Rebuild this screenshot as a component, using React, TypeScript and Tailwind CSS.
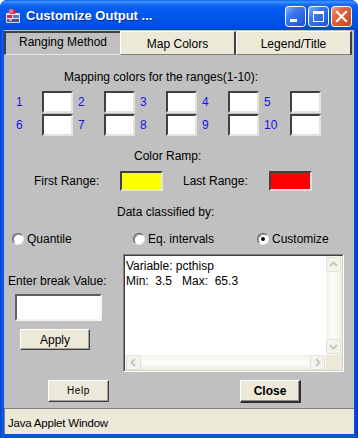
import React from "react";

function TitleIcon() {
  return (
    <svg width="16" height="16" viewBox="0 0 16 16">
      <rect x="1" y="5" width="14" height="10" rx="1" fill="#E8E0F0" />
      <path d="M3 3 L7 1 L11 3 L9 6 L5 6 Z" fill="#E04060" />
      <circle cx="6" cy="3" r="2" fill="#F07090" />
      <circle cx="10" cy="4" r="1.6" fill="#D02040" />
      <rect x="2" y="7" width="5" height="3" fill="#C03050" />
      <rect x="8" y="7" width="6" height="3" fill="#6070D0" />
      <rect x="2" y="11" width="12" height="3" fill="#4050B0" />
      <rect x="4" y="11" width="3" height="2" fill="#F090B0" />
    </svg>
  );
}

function WinButton({ kind }: { kind: "min" | "max" | "close" }) {
  const isClose = kind === "close";
  return (
    <svg width="21" height="21" viewBox="0 0 21 21">
      <defs>
        <linearGradient id={"g" + kind} x1="0" y1="0" x2="1" y2="1">
          {isClose ? (
            <>
              <stop offset="0" stopColor="#F2A183" />
              <stop offset="0.35" stopColor="#E3663F" />
              <stop offset="1" stopColor="#C83F1A" />
            </>
          ) : (
            <>
              <stop offset="0" stopColor="#8BB3FA" />
              <stop offset="0.35" stopColor="#3D79F2" />
              <stop offset="1" stopColor="#1E4FD6" />
            </>
          )}
        </linearGradient>
      </defs>
      <rect x="0.5" y="0.5" width="20" height="20" rx="3" fill={`url(#g${kind})`} stroke="#FFFFFF" />
      {kind === "min" && <rect x="5" y="13" width="7" height="3" fill="#FFFFFF" />}
      {kind === "max" && (
        <>
          <rect x="5.5" y="5.5" width="10" height="10" fill="none" stroke="#FFFFFF" />
          <rect x="5" y="5" width="11" height="3" fill="#FFFFFF" />
        </>
      )}
      {isClose && (
        <path d="M6 6 L15 15 M15 6 L6 15" stroke="#FFFFFF" strokeWidth="2.2" strokeLinecap="square" />
      )}
    </svg>
  );
}

function Chevron({ dir }: { dir: "up" | "down" | "left" | "right" }) {
  const d =
    dir === "up"
      ? "M4 9 L7.5 5.5 L11 9"
      : dir === "down"
      ? "M4 6 L7.5 9.5 L11 6"
      : dir === "left"
      ? "M9 4 L5.5 7.5 L9 11"
      : "M6 4 L9.5 7.5 L6 11";
  return (
    <svg width="15" height="15" viewBox="0 0 15 15">
      <rect x="0.5" y="0.5" width="14" height="14" rx="2" fill="#F4F3EE" stroke="#E3E1D6" />
      <path d={d} fill="none" stroke="#C9C7BA" strokeWidth="2" />
    </svg>
  );
}

function RangeCell({ n }: { n: number }) {
  return (
    <div className="w-[62px] flex items-center">
      <div className="w-[26px] text-[#1515E8]">{n}</div>
      <div className="w-[31px] h-[22px] bg-white border-2 border-t-[#404040] border-l-[#404040] border-b-[#E2E2E2] border-r-[#E2E2E2]" />
    </div>
  );
}

function Radio({ label, checked }: { label: string; checked?: boolean }) {
  return (
    <div className="flex items-center">
      <div className="w-[12px] h-[12px] rounded-full bg-white border border-t-[#5A5A5A] border-l-[#5A5A5A] border-b-[#E8E8E8] border-r-[#E8E8E8] flex items-center justify-center shadow-[inset_1px_1px_0_#A0A0A0]">
        {checked && <div className="w-[4px] h-[4px] rounded-full bg-black" />}
      </div>
      <div className="ml-[3px]">{label}</div>
    </div>
  );
}

export default function App() {
  return (
    <div className="w-[358px] h-[438px] flex flex-col bg-[#0055E5] rounded-t-[7px] overflow-hidden font-['Liberation_Sans',Arial,sans-serif] text-[12px] leading-[14px] text-black">
      {/* Title bar */}
      <div className="h-[30px] flex items-center bg-[linear-gradient(180deg,#0A5EEF_0%,#3D95FF_6%,#2675F8_12%,#0A5FF0_22%,#0058EE_40%,#0055E5_65%,#0050DD_85%,#0046CF_100%)]">
        <div className="ml-[5px] mt-[1px] w-[16px] h-[16px]">
          <TitleIcon />
        </div>
        <div className="ml-[5px] mt-[2px] text-[13px] font-bold text-white [text-shadow:1px_1px_0_#0A2A90]">
          Customize Output ...
        </div>
        <div className="ml-auto mr-[6px] mt-[2px] flex gap-[2px]">
          <WinButton kind="min" />
          <WinButton kind="max" />
          <WinButton kind="close" />
        </div>
      </div>

      {/* Frame */}
      <div className="flex-1 flex flex-col px-[4px] pb-[4px] bg-[linear-gradient(90deg,#0037C8_0px,#0B5EF0_2px,#0055E5_4px,#0055E5_354px,#0046D5_356px,#0035B8_358px)]">
        <div className="flex-1 flex flex-col bg-[#C0C0C0]">
          {/* Tabs */}
          <div className="mt-[1px] h-[24px] flex">
            <div className="w-[116px] flex items-center justify-center pb-[3px] bg-[#C0C0C0] border-t-2 border-l-2 border-b border-t-[#404040] border-l-[#404040] border-b-[#E6E6E6]">
              Ranging Method
            </div>
            <div className="w-[116px] flex items-center justify-center pt-[1px] bg-[#ECE9D8] border border-r-2 border-t-white border-l-white border-b-[#808080] border-r-[#404040]">
              Map Colors
            </div>
            <div className="w-[116px] flex items-center justify-center pt-[1px] bg-[#ECE9D8] border border-r-2 border-t-white border-l-white border-b-[#808080] border-r-[#404040]">
              Legend/Title
            </div>
          </div>

          {/* Heading */}
          <div className="mt-[15px] h-[14px] pl-[60px]">Mapping colors for the ranges(1-10):</div>

          {/* Range grid */}
          <div className="mt-[7px] pl-[12px] flex">
            {[1, 2, 3, 4, 5].map((n) => (
              <RangeCell key={n} n={n} />
            ))}
          </div>
          <div className="mt-[1px] pl-[12px] flex">
            {[6, 7, 8, 9, 10].map((n) => (
              <RangeCell key={n} n={n} />
            ))}
          </div>

          <div className="mt-[13px] h-[14px] pl-[130px]">Color Ramp:</div>

          <div className="mt-[8px] h-[20px] pl-[30px] flex items-center">
            <div className="w-[86px]">First Range:</div>
            <div className="w-[43px] h-[20px] bg-[#FFFF00] border-2 border-t-[#404040] border-l-[#404040] border-b-[#E2E2E2] border-r-[#E2E2E2]" />
            <div className="ml-[20px] w-[86px]">Last Range:</div>
            <div className="w-[43px] h-[20px] bg-[#FF0000] border-2 border-t-[#404040] border-l-[#404040] border-b-[#E2E2E2] border-r-[#E2E2E2]" />
          </div>

          <div className="mt-[14px] h-[14px] pl-[113px]">Data classified by:</div>

          <div className="mt-[13px] h-[14px] pl-[8px] flex items-center">
            <div className="w-[121px]">
              <Radio label="Quantile" />
            </div>
            <div className="w-[124px]">
              <Radio label="Eq. intervals" />
            </div>
            <div>
              <Radio label="Customize" checked />
            </div>
          </div>

          {/* Bottom area */}
          <div className="mt-[8px] h-[118px] flex">
            <div className="w-[119px] flex flex-col">
              <div className="mt-[20px] ml-[4px] h-[14px]">Enter break Value:</div>
              <div className="mt-[6px] ml-[11px] w-[87px] h-[27px] bg-white border-2 border-t-[#606060] border-l-[#606060] border-b-[#F4F4F4] border-r-[#F4F4F4]" />
              <div className="mt-[8px] ml-[16px] w-[70px] h-[21px] bg-[#ECE9D8] flex items-center justify-center border border-t-white border-l-white border-b-[#404040] border-r-[#404040] shadow-[inset_-1px_-1px_0_#A0A0A0]">
                Apply
              </div>
            </div>
            <div className="w-[221px] border border-t-[#808080] border-l-[#808080] border-b-white border-r-white">
              <div className="w-full h-full border border-t-[#404040] border-l-[#404040] border-b-[#D4D0C8] border-r-[#D4D0C8] bg-white flex flex-col">
                <div className="flex-1 flex">
                  <div className="flex-1 pl-[1px] pt-[3px] leading-[15px] whitespace-pre">
                    <div>Variable: pcthisp</div>
                    <div>Min:  3.5   Max:  65.3</div>
                  </div>
                  <div className="w-[16px] flex flex-col justify-between bg-[linear-gradient(90deg,#F3F1EA,#FDFDFA,#EEEDE5)] py-[1px]">
                    <Chevron dir="up" />
                    <Chevron dir="down" />
                  </div>
                </div>
                <div className="h-[15px] flex">
                  <div className="flex-1 flex justify-between px-[1px] bg-[linear-gradient(180deg,#F3F1EA,#FDFDFA,#EEEDE5)]">
                    <Chevron dir="left" />
                    <Chevron dir="right" />
                  </div>
                  <div className="w-[16px] bg-[#ECE9D8]" />
                </div>
              </div>
            </div>
          </div>

          {/* Buttons */}
          <div className="mt-[8px] h-[22px] flex">
            <div className="ml-[44px] w-[61px] h-[22px] bg-[#ECE9D8] flex items-center justify-center text-[10px] tracking-[0.6px] border border-t-white border-l-white border-b-[#404040] border-r-[#404040] shadow-[inset_-1px_-1px_0_#A0A0A0]">
              Help
            </div>
            <div className="ml-[131px] w-[61px] h-[23px] bg-[#ECE9D8] flex items-center justify-center font-bold border border-b-2 border-r-2 border-t-white border-l-white border-b-[#303030] border-r-[#303030] shadow-[inset_-1px_-1px_0_#909090]">
              Close
            </div>
          </div>

          {/* Status bar */}
          <div className="mt-auto h-[26px] bg-[#ECE9D8] border-t border-l border-t-[#808080] border-l-[#808080] flex items-center pl-[3px] pt-[2px] text-[11.5px] tracking-[-0.2px]">
            Java Applet Window
          </div>
        </div>
      </div>
    </div>
  );
}
